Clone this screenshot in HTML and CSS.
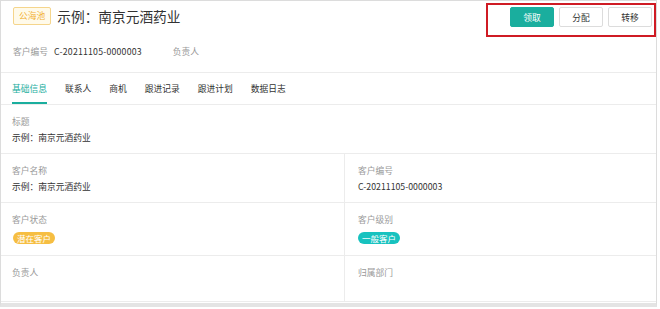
FILE: index.html
```html
<!DOCTYPE html>
<html lang="zh-CN">
<head>
<meta charset="utf-8">
<title>客户详情</title>
<link rel="stylesheet" href="styles.css">
</head>
<body>
<div class="page">
  <div class="header">
    <div class="title-row">
      <span class="pool-badge">公海池</span>
      <h1 class="title">示例：南京元酒药业</h1>
      <div class="actions">
        <button class="btn btn-primary">领取</button>
        <button class="btn">分配</button>
        <button class="btn">转移</button>
      </div>
    </div>
    <div class="meta-row">
      <span class="meta-label">客户编号</span>
      <span class="meta-value">C-20211105-0000003</span>
      <span class="meta-label meta-owner">负责人</span>
    </div>
    <div class="highlight-box"></div>
  </div>
  <div class="tabs">
    <span class="tab active">基础信息</span>
    <span class="tab">联系人</span>
    <span class="tab">商机</span>
    <span class="tab">跟进记录</span>
    <span class="tab">跟进计划</span>
    <span class="tab">数据日志</span>
  </div>
  <div class="row">
    <div class="cell">
      <div class="label">标题</div>
      <div class="value">示例：南京元酒药业</div>
    </div>
  </div>
  <div class="row two">
    <div class="cell left">
      <div class="label">客户名称</div>
      <div class="value">示例：南京元酒药业</div>
    </div>
    <div class="cell right">
      <div class="label">客户编号</div>
      <div class="value">C-20211105-0000003</div>
    </div>
  </div>
  <div class="row two">
    <div class="cell left">
      <div class="label">客户状态</div>
      <div class="value tags"><span class="tag tag-yellow">潜在客户</span></div>
    </div>
    <div class="cell right">
      <div class="label">客户级别</div>
      <div class="value tags"><span class="tag tag-cyan">一般客户</span></div>
    </div>
  </div>
  <div class="row two last">
    <div class="cell left">
      <div class="label">负责人</div>
      <div class="value empty"></div>
    </div>
    <div class="cell right">
      <div class="label">归属部门</div>
      <div class="value empty"></div>
    </div>
  </div>
</div>
</body>
</html>
```

FILE: styles.css
```css
* { box-sizing: border-box; }
html, body {
  margin: 0;
  padding: 0;
  background: #fff;
}
body {
  font-family: "Noto Sans CJK SC", "Noto Sans", sans-serif;
  color: #333;
  font-size: 8.75px;
}
.page {
  width: 657px;
  border: 1px solid #dcdcdc;
  border-bottom: 4px solid #e4e4e4;
  padding-bottom: 1px;
}
.header {
  position: relative;
  border-bottom: 1px solid #ececec;
  padding: 6px 4px 12px 12px;
}
.title-row {
  display: flex;
  align-items: center;
  height: 20px;
}
.pool-badge {
  display: inline-block;
  height: 18px;
  line-height: 16px;
  padding: 0 5px;
  border: 1px solid #f5d58c;
  background: #fffaea;
  color: #f2b134;
  border-radius: 2px;
  font-size: 8.75px;
  margin-top: -2px;
}
.title {
  margin: -2px 0 0 6px;
  font-size: 13.7px;
  font-weight: normal;
  color: #333;
  line-height: 20px;
}
.actions {
  margin-left: auto;
  display: flex;
  gap: 5px;
}
.btn {
  width: 44px;
  height: 20px;
  border: 1px solid #dcdcdc;
  background: #fff;
  color: #333;
  font-family: inherit;
  font-size: 8.75px;
  padding: 0;
  border-radius: 2px;
}
.btn-primary {
  background: #1aae9e;
  border-color: #1aae9e;
  color: #fff;
}
.meta-row {
  margin-top: 17px;
  line-height: 16px;
  display: flex;
}
.meta-label { color: #999; }
.meta-value { margin-left: 6px; color: #333; letter-spacing: 0.2px; }
.meta-owner { margin-left: 31px; }
.highlight-box {
  position: absolute;
  left: 485px;
  top: 2px;
  width: 170px;
  height: 34px;
  border: 2px solid #cf1b24;
}
.tabs {
  display: flex;
  gap: 18px;
  padding-left: 11px;
  border-bottom: 1px solid #ececec;
}
.tab {
  padding: 8px 0 5px;
  line-height: 16px;
  border-bottom: 2px solid transparent;
  color: #333;
}
.tab.active {
  color: #1aae9e;
  border-bottom-color: #1aae9e;
}
.row {
  display: flex;
  border-bottom: 1px solid #ececec;
}
.cell {
  padding: 9px 12px 7px 11px;
  line-height: 16px;
  flex: 1;
}
.row.two .left {
  flex: 0 0 344px;
  border-right: 1px solid #ececec;
}
.row.two .right {
  padding-left: 13px;
}
.label { color: #999; }
.value { color: #333; }
.value.tags {
  line-height: 12px;
  padding: 4px 0;
}
.value.empty { height: 13px; }
.tag {
  display: inline-block;
  height: 12px;
  line-height: 12px;
  padding: 0 4px;
  border-radius: 6px;
  color: #fff;
  font-size: 8.5px;
  vertical-align: top;
}
.tag-yellow { background: #f6be42; margin-left: 1px; }
.tag-cyan { background: #17c2bf; }
```
